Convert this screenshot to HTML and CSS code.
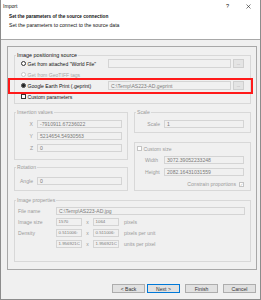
FILE: index.html
```html
<!DOCTYPE html>
<html lang="en">
<head>
    <meta charset="UTF-8">
    <title>Import</title>
    <link rel="stylesheet" href="styles.css">
</head>
<body>

<div class="dialog">
    <div class="top">
        <div class="titlebar">
            <span>Import</span>
            <span class="help">?</span>
            <svg class="close" width="5" height="5" viewBox="0 0 5 5"><path d="M0.5 0.5L4.5 4.5M4.5 0.5L0.5 4.5" stroke="#222" stroke-width="0.6"/></svg>
        </div>
        <div class="heading">Set the parameters of the source connection</div>
        <div class="subtitle">Set the parameters to connect to the source data</div>
    </div>

    <div class="content">
        <div class="panel">
            <fieldset class="group source">
                <legend>Image positioning source</legend>
                <div class="row">
                    <label class="choice"><span class="radio"></span>Get from attached "World File"</label>
                    <span class="field"></span>
                    <span class="dots">...</span>
                </div>
                <div class="row disabled">
                    <label class="choice"><span class="radio"></span>Get from GeoTIFF tags</label>
                </div>
                <div class="row marked">
                    <label class="choice"><span class="radio checked"></span>Google Earth Print (.geprint)</label>
                    <span class="field">C:\Temp\AS223-AD.geprint</span>
                    <span class="dots">...</span>
                </div>
                <div class="row">
                    <label class="choice"><span class="check"></span>Custom parameters</label>
                </div>
            </fieldset>

            <div class="cols">
                <div class="col left">
                    <fieldset class="group insertion">
                        <legend>Insertion values</legend>
                        <div class="line"><span class="lbl">X</span><span class="field">-7910911.67236022</span></div>
                        <div class="line"><span class="lbl">Y</span><span class="field">5214654.54930563</span></div>
                        <div class="line"><span class="lbl">Z</span><span class="field">0</span></div>
                    </fieldset>
                    <fieldset class="group rotation">
                        <legend>Rotation</legend>
                        <div class="line"><span class="lbl">Angle</span><span class="field">0</span></div>
                    </fieldset>
                </div>
                <div class="col right">
                    <fieldset class="group scale">
                        <legend>Scale</legend>
                        <div class="line"><span class="lbl">Scale</span><span class="field">1</span></div>
                    </fieldset>
                    <fieldset class="group custom-size">
                        <div class="line head"><span class="check off"></span>Custom size</div>
                        <div class="line"><span class="lbl">Width</span><span class="field">3072.39052233248</span></div>
                        <div class="line"><span class="lbl">Height</span><span class="field">2082.16431031559</span></div>
                        <div class="line constrain">Constrain proportions<span class="check off ticked">&#10003;</span></div>
                    </fieldset>
                </div>
            </div>

            <fieldset class="group props">
                <legend>Image properties</legend>
                <div class="line"><span class="lbl">File name</span><span class="field wide">C:\Temp\AS223-AD.jpg</span></div>
                <div class="line"><span class="lbl">Image size</span><span class="field small">1570</span><span class="times">x</span><span class="field small">1064</span><span class="unit">pixels</span></div>
                <div class="line"><span class="lbl">Density</span><span class="field small">0.511006:</span><span class="times">x</span><span class="field small">0.511006:</span><span class="unit">pixels per unit</span></div>
                <div class="line"><span class="lbl"></span><span class="field small">1.956921C</span><span class="times">x</span><span class="field small">1.956921C</span><span class="unit">units per pixel</span></div>
            </fieldset>
        </div>

        <div class="buttons">
            <span class="btn">&lt; Back</span>
            <span class="btn default">Next &gt;</span>
            <span class="btn">Finish</span>
            <span class="btn">Cancel</span>
        </div>
    </div>
</div>

</body>
</html>
```

FILE: styles.css
```css
* {
    box-sizing: border-box;
}
body {
    margin: 0;
    font-family: "Liberation Sans", Arial, sans-serif;
    font-size: 5.1px;
    color: #111;
}
.dialog {
    width: 261px;
    height: 300px;
    background: #f0f0f0;
    border: 1px solid #8c8c8c;
    border-top: 0;
    display: flex;
    flex-direction: column;
}
.top {
    height: 40px;
    background: #fff;
    border-bottom: 1px solid #a8a8a8;
}
.titlebar {
    height: 12px;
    display: flex;
    align-items: center;
    padding-left: 2px;
}
.help {
    margin-left: auto;
    margin-right: 17px;
    font-size: 5.5px;
}
.close {
    margin-right: 9px;
}
.heading {
    padding-left: 8px;
    margin-top: 1px;
    line-height: 8px;
    font-size: 4.7px;
    font-weight: bold;
}
.subtitle {
    padding-left: 8px;
    line-height: 8px;
}
.content {
    padding: 6px 3px 0 6px;
}
.panel {
    height: 224px;
    border: 1px solid #a8a8a8;
    padding: 0 5px 0 6px;
}

/* group boxes */
.group {
    margin: 0;
    padding: 0;
    min-width: 0;
    border: 1px solid #d8d8d8;
}
.group legend {
    margin-left: 1px;
    padding: 0 1px;
    line-height: 6px;
    color: #9a9a9a;
}
.source {
    margin-top: 5px;
    padding-bottom: 1px;
}
.source legend {
    color: #111;
    font-size: 5.4px;
}
.row {
    display: flex;
    align-items: center;
    height: 11px;
    padding: 0 6px;
    position: relative;
}
.choice {
    width: 87px;
    display: flex;
    align-items: center;
    white-space: nowrap;
}
.disabled .choice {
    color: #a8a8a8;
}
.radio {
    width: 5px;
    height: 5px;
    border: 0.6px solid #333;
    border-radius: 50%;
    background: #fff;
    margin-right: 1.5px;
    display: flex;
    align-items: center;
    justify-content: center;
}
.disabled .radio {
    border-color: #c8c8c8;
}
.radio.checked::after {
    content: "";
    width: 2.4px;
    height: 2.4px;
    border-radius: 50%;
    background: #222;
}
.check {
    width: 5px;
    height: 5px;
    border: 0.6px solid #333;
    background: #fff;
    margin-right: 1.5px;
    display: inline-flex;
    align-items: center;
    justify-content: center;
}
.check.off {
    border-color: #c4c4c4;
}
.ticked {
    margin: 0 0 0 3px;
    font-size: 4px;
    color: #b0b0b0;
}
.field {
    width: 123px;
    height: 9px;
    border: 1px solid #d4d4d4;
    background: #f0f0f0;
    color: #7a7a7a;
    padding-left: 2px;
    display: flex;
    align-items: center;
    white-space: nowrap;
    overflow: hidden;
}
.dots {
    width: 11px;
    height: 9px;
    margin-left: 2px;
    border: 1px solid #cfcfcf;
    background: #e4e4e4;
    color: #888;
    font-size: 4px;
    display: flex;
    align-items: center;
    justify-content: center;
}
.marked::after {
    content: "";
    position: absolute;
    top: -2px;
    bottom: -3px;
    left: -7px;
    right: -3px;
    border: 2px solid #ff1a1a;
}

/* lower columns */
.cols {
    display: flex;
    gap: 6px;
    margin-top: 5px;
}
.col {
    display: flex;
    flex-direction: column;
}
.col.left {
    width: 114px;
}
.col.right {
    width: 117px;
}
.line {
    display: flex;
    align-items: center;
    height: 12px;
    color: #9a9a9a;
    white-space: nowrap;
}
.line .field {
    height: 8px;
}
.lbl {
    text-align: right;
    padding-right: 4px;
}
.insertion {
    padding: 3px 0 5px;
}
.insertion .lbl,
.rotation .lbl {
    width: 22px;
}
.insertion .field,
.rotation .field {
    width: 85px;
}
.rotation {
    margin-top: 4px;
    padding: 5px 0 3px;
}
.scale {
    padding: 3px 0 2px;
}
.scale .lbl {
    width: 29px;
}
.scale .field,
.custom-size .field {
    width: 80px;
}
.custom-size {
    margin-top: 9px;
}
.custom-size .head {
    height: 11px;
    padding-left: 2px;
}
.custom-size .lbl {
    width: 29px;
    text-align: left;
    padding-left: 10px;
}
.constrain {
    justify-content: flex-end;
    padding-right: 6px;
}

/* image properties */
.props {
    margin-top: 6px;
    padding: 2px 0 12px;
}
.props .line {
    height: 11px;
}
.props .lbl {
    width: 41px;
    text-align: left;
    padding-left: 3px;
}
.props .wide {
    width: 189px;
}
.props .small {
    width: 26px;
    padding-left: 1.5px;
    font-size: 4.4px;
}
.times {
    width: 11px;
    text-align: center;
}
.unit {
    margin-left: 5px;
}

/* footer buttons */
.buttons {
    display: flex;
    justify-content: flex-end;
    gap: 5px;
    margin-top: 14px;
    padding-right: 1px;
}
.btn {
    width: 33px;
    height: 9px;
    border: 1px solid #adadad;
    background: #e1e1e1;
    color: #333;
    display: flex;
    align-items: center;
    justify-content: center;
}
.btn:first-child {
    margin-right: -3px;
}
.btn.default {
    border-color: #0078d7;
}
```
